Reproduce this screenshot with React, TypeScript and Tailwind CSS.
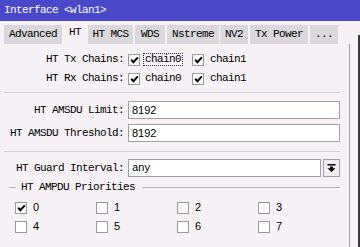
import React from "react";

const mono = "[font-family:Liberation_Mono,monospace] text-[11px] tracking-[-0.6px]";
const sans = "[font-family:Liberation_Sans,Arial,sans-serif] text-[11px] tracking-normal";

const tabs = [
  { label: "Advanced", w: "w-[58px]", active: false },
  { label: "HT", w: "w-[22px]", active: true },
  { label: "HT MCS", w: "w-[45px]", active: false },
  { label: "WDS", w: "w-[30px]", active: false },
  { label: "Nstreme", w: "w-[52px]", active: false },
  { label: "NV2", w: "w-[28px]", active: false },
  { label: "Tx Power", w: "w-[58px]", active: false },
  { label: "...", w: "w-[28px]", active: false },
];

function Check({ checked }: { checked?: boolean }) {
  return (
    <span className="w-[12px] h-[12px] shrink-0 border border-[#9a9a9a] bg-white flex items-center justify-center">
      {checked && (
        <svg width="9" height="8" viewBox="0 0 9 8">
          <path d="M1.2 3.8 L3.4 6.2 L7.8 1.4" stroke="#000" strokeWidth="2" fill="none" />
        </svg>
      )}
    </span>
  );
}

function ChainRow({ label, focus }: { label: string; focus?: boolean }) {
  return (
    <div className="h-[19px] flex items-center">
      <span className="w-[120px] text-right whitespace-pre">{label}</span>
      <span className="ml-[4px]">
        <Check checked />
      </span>
      <span
        className={
          focus
            ? "ml-[3px] px-[1px] leading-[11px] border border-dotted border-[#333]"
            : "ml-[3px] px-[1px] leading-[11px] border border-transparent"
        }
      >
        chain0
      </span>
      <span className="ml-[9px]">
        <Check checked />
      </span>
      <span className="ml-[6px]">chain1</span>
    </div>
  );
}

function FieldRow({ label, value }: { label: string; value: string }) {
  return (
    <div className="h-[18px] flex items-center">
      <span className="w-[120px] text-right whitespace-pre">{label}</span>
      <div className={`ml-[4px] flex-1 h-full border border-[#a0a0a0] bg-white pl-[3px] flex items-center ${sans}`}>
        {value}
      </div>
    </div>
  );
}

export default function App() {
  const priorities = [0, 1, 2, 3, 4, 5, 6, 7];

  return (
    <div className={`w-[360px] h-[247px] overflow-hidden bg-[#f5f1f5] text-black flex flex-col ${mono}`}>
      {/* window title */}
      <div className="h-[21px] shrink-0 bg-[#4848c8] text-white pl-[4px] flex items-center">
        {"Interface <wlan1>"}
      </div>

      <div className="flex flex-1 min-h-0">
        <div className="w-[350px] flex flex-col">
          {/* tabs */}
          <div className="h-[23px] shrink-0 pt-[4px] pl-[4px] flex">
            {tabs.map((t, i) => (
              <div
                key={t.label}
                className={`${t.w} ${i > 0 ? (t.label === "NV2" ? "ml-[1px]" : "ml-[2px]") : ""} h-[19px] flex items-center justify-center whitespace-pre ${
                  t.active ? "pb-[4px]" : "bg-[#dad8da]"
                }`}
              >
                {t.label}
              </div>
            ))}
          </div>

          {/* content */}
          <div className="flex-1 border-r border-[#a0a0a0] pl-[4px] pr-[9px] flex flex-col">
            <div className="mt-[6px]">
              <ChainRow label="HT Tx Chains:" focus />
              <ChainRow label="HT Rx Chains:" />
            </div>
            <div className="mt-[4px] h-px bg-[#d2ced2]" />

            <div className="mt-[8px]">
              <FieldRow label="HT AMSDU Limit:" value="8192" />
            </div>
            <div className="mt-[5px]">
              <FieldRow label="HT AMSDU Threshold:" value="8192" />
            </div>
            <div className="mt-[9px] h-px bg-[#d2ced2]" />

            <div className="mt-[7px] h-[18px] flex items-center">
              <span className="w-[120px] text-right whitespace-pre">HT Guard Interval:</span>
              <div className="ml-[4px] flex-1 h-full border border-[#a0a0a0] bg-white pl-[3px] flex items-center">
                any
              </div>
              <div className="ml-[2px] w-[17px] h-full border border-[#a0a0a0] bg-[#f0ecf0] flex items-center justify-center">
                <svg width="9" height="8" viewBox="0 0 9 8">
                  <rect x="0.5" y="0" width="8" height="1.5" fill="#000" />
                  <path d="M3 2.5 H6 V4.2 H8.5 L4.5 8 L0.5 4.2 H3 Z" fill="#000" />
                </svg>
              </div>
            </div>

            {/* group header */}
            <div className="mt-[4px] h-[12px] flex items-center">
              <span className="ml-[5px] w-[7px] h-px bg-[#b8b4b8]" />
              <span className="ml-[5px] whitespace-pre">HT AMPDU Priorities</span>
              <span className="ml-[7px] flex-1 h-px bg-[#b8b4b8]" />
            </div>

            <div className="mt-[5px] pl-[11px] grid grid-cols-[81px_81px_81px_81px]">
              {priorities.map((p) => (
                <div key={p} className="h-[19px] flex items-center">
                  <Check checked={p === 0} />
                  <span className={`ml-[6px] ${sans}`}>{p}</span>
                </div>
              ))}
            </div>
          </div>
        </div>

        <div className="flex-1 pl-[8px] pt-[14px]">
          <div className="h-full border-l-2 border-[#3a3a3a]" />
        </div>
      </div>
    </div>
  );
}
